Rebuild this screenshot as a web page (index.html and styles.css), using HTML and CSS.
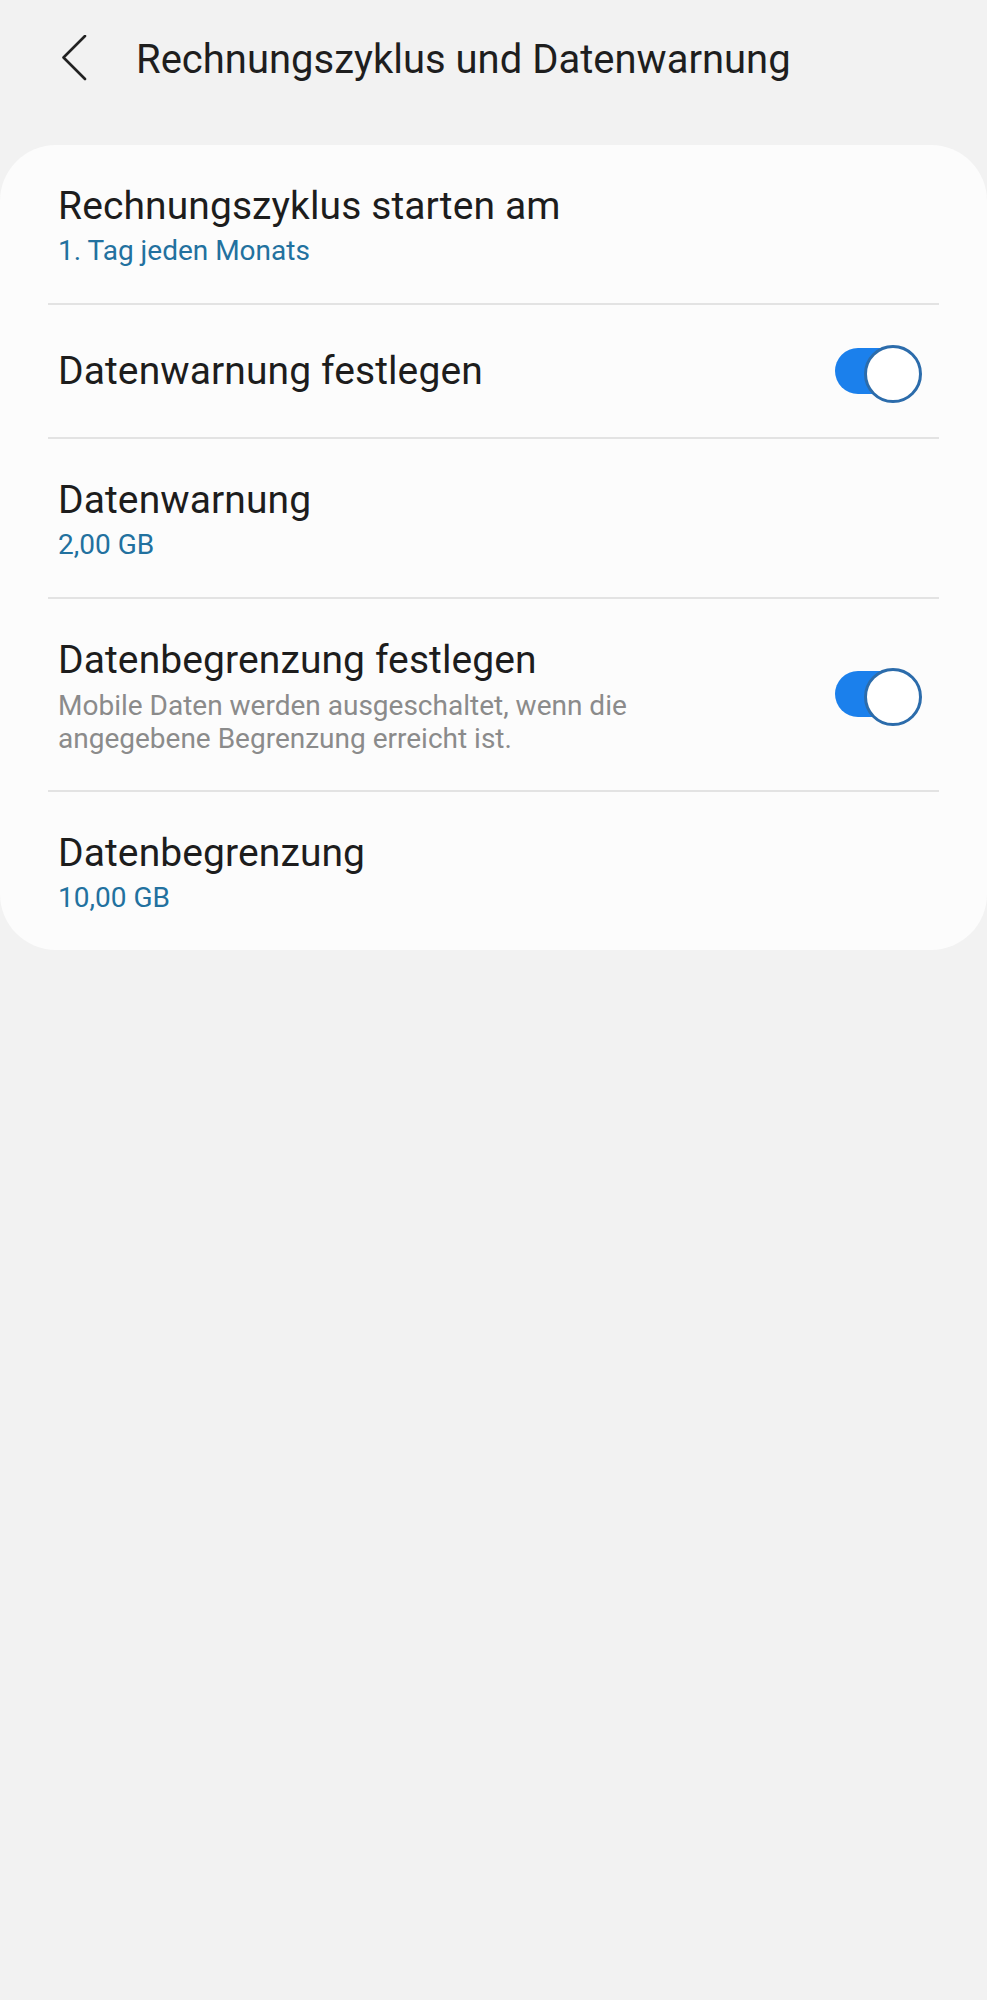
FILE: index.html
```html
<!DOCTYPE html>
<html lang="de">
<head>
    <meta charset="UTF-8">
    <meta name="viewport" content="width=device-width, initial-scale=1.0">
    <title>Rechnungszyklus und Datenwarnung</title>
    <link rel="stylesheet" href="styles.css">
</head>
<body>

    <header class="topbar">
        <svg class="back" width="26" height="46" viewBox="0 0 26 46">
            <path d="M23 1 L1.5 22.5 L23 44" fill="none" stroke="#222" stroke-width="2.6" stroke-linecap="round" stroke-linejoin="round"/>
        </svg>
        <h1>Rechnungszyklus und Datenwarnung</h1>
    </header>

    <div class="card">
        <div class="row">
            <div class="row-text">
                <div class="row-title">Rechnungszyklus starten am</div>
                <div class="row-value">1. Tag jeden Monats</div>
            </div>
        </div>
        <div class="row row-single">
            <div class="row-text">
                <div class="row-title">Datenwarnung festlegen</div>
            </div>
            <div class="toggle on"></div>
        </div>
        <div class="row">
            <div class="row-text">
                <div class="row-title">Datenwarnung</div>
                <div class="row-value">2,00 GB</div>
            </div>
        </div>
        <div class="row row-summary">
            <div class="row-text">
                <div class="row-title">Datenbegrenzung festlegen</div>
                <div class="row-desc">Mobile Daten werden ausgeschaltet, wenn die angegebene Begrenzung erreicht ist.</div>
            </div>
            <div class="toggle on"></div>
        </div>
        <div class="row">
            <div class="row-text">
                <div class="row-title">Datenbegrenzung</div>
                <div class="row-value">10,00 GB</div>
            </div>
        </div>
    </div>

</body>
</html>
```

FILE: styles.css
```css
:root {
    --fundo: #f2f2f2;
    --card: #fcfcfc;
    --texto: #1d1d1d;
    --azul: #22719f;
    --cinza: #8b8b8b;
    --linha: #e3e3e3;
    --toggle: #1b80ec;
    --toggle-borda: #2c6cab;
}

* {
    margin: 0;
    padding: 0;
    box-sizing: border-box;
}

body {
    background: var(--fundo);
    color: var(--texto);
    font-family: Roboto, "Liberation Sans", sans-serif;
    min-height: 2000px;
}

.topbar {
    display: flex;
    align-items: flex-start;
    height: 145px;
    padding-top: 35px;
}

.back {
    margin-left: 62px;
    flex-shrink: 0;
}

.topbar h1 {
    margin-left: 48px;
    margin-top: 1px;
    font-size: 40px;
    line-height: 48px;
    font-weight: 400;
    color: #1e1e1e;
}

.card {
    background: var(--card);
    border-radius: 56px;
}

.row {
    display: flex;
    align-items: center;
    margin: 0 48px;
    padding: 38px 17px 30px 10px;
}

.row + .row {
    border-top: 2px solid var(--linha);
}

.row-single {
    padding-top: 40px;
    padding-bottom: 40px;
}

.row-summary {
    align-items: flex-start;
    padding-bottom: 35px;
}

.row-summary .toggle {
    margin-top: 31px;
}

.row-text {
    flex: 1;
    max-width: 620px;
}

.row-title {
    font-size: 39px;
    line-height: 46px;
    letter-spacing: 0.1px;
}

.row-value {
    font-size: 28px;
    line-height: 44px;
    color: var(--azul);
}

.row-desc {
    margin-top: 6px;
    font-size: 28px;
    line-height: 33px;
    color: var(--cinza);
}

.toggle {
    position: relative;
    width: 87px;
    height: 52px;
    margin-left: auto;
    flex-shrink: 0;
}

.toggle::before {
    content: "";
    position: absolute;
    left: 0;
    top: 3px;
    width: 72px;
    height: 46px;
    border-radius: 23px;
    background: var(--toggle);
}

.toggle::after {
    content: "";
    position: absolute;
    right: 0;
    top: 0;
    width: 52px;
    height: 52px;
    border-radius: 50%;
    background: #fff;
    border: 3px solid var(--toggle-borda);
}
```
